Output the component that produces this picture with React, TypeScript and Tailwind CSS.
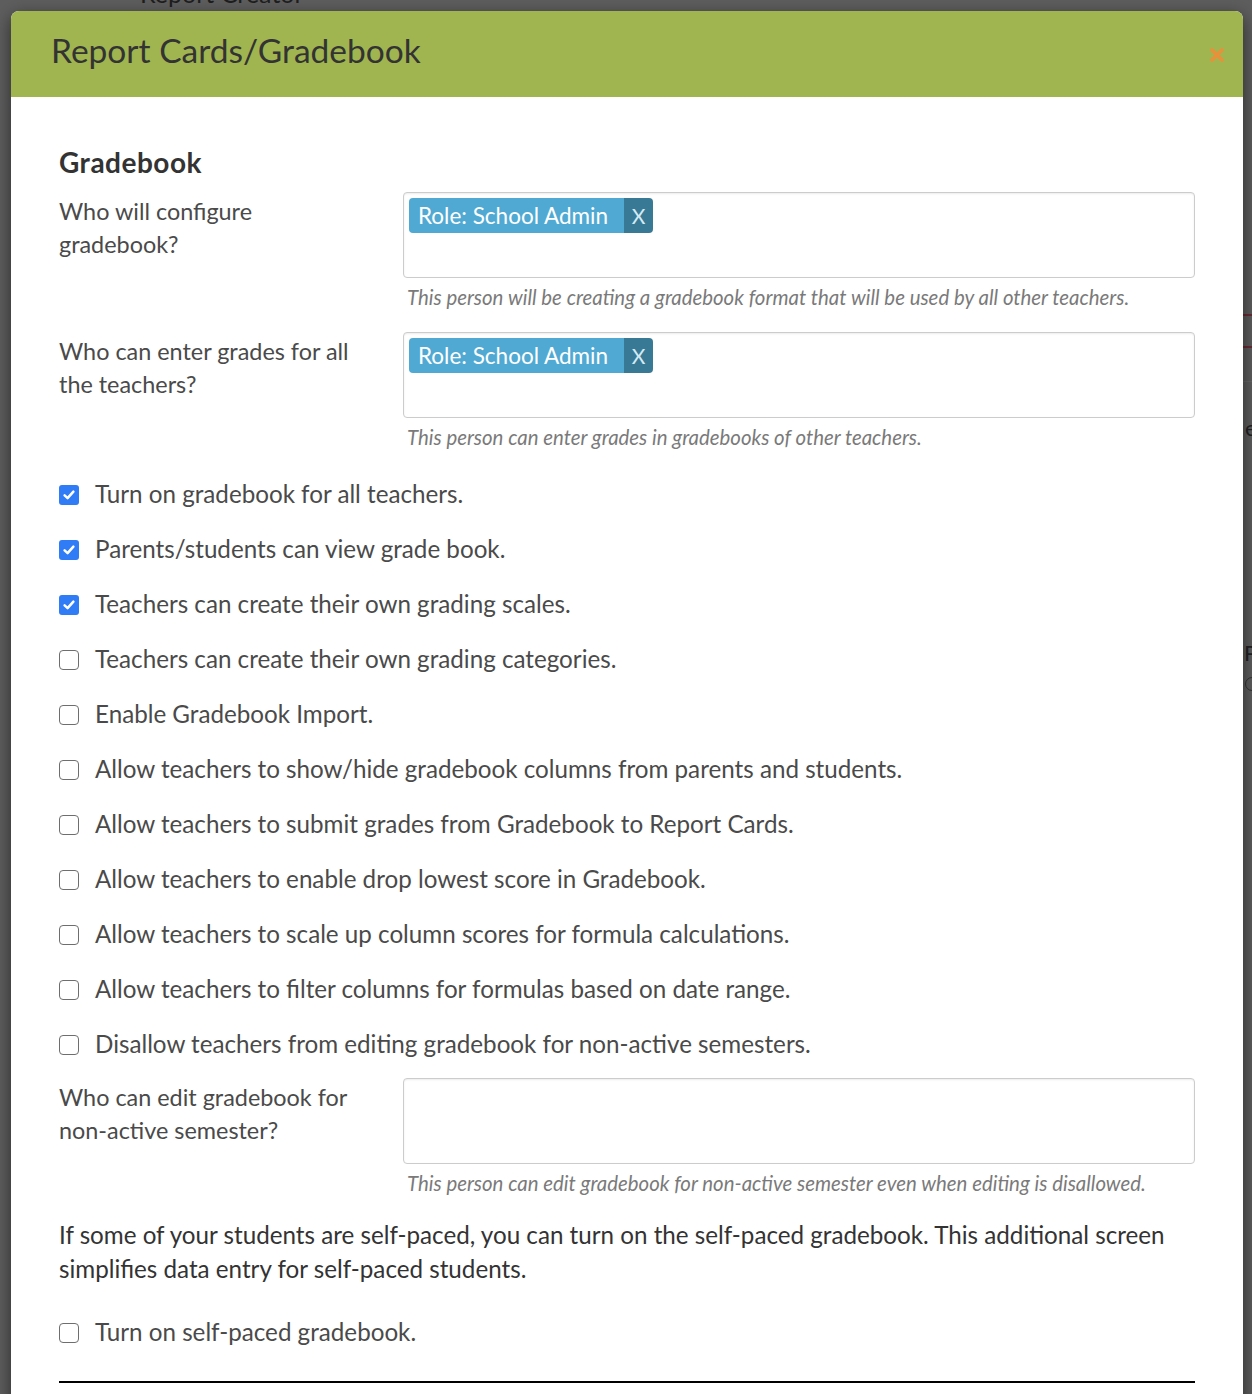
import React from "react";

const font = { fontFamily: "Lato, 'Noto Sans', sans-serif" };

function Check({ checked }: { checked: boolean }) {
  if (checked) {
    return (
      <span className="flex h-[20px] w-[20px] shrink-0 items-center justify-center rounded-[3px] bg-[#2f7cf6]">
        <svg width="14" height="14" viewBox="0 0 14 14">
          <path d="M2.6 7.4 L5.6 10.2 L11.4 3.6" fill="none" stroke="#fff" strokeWidth="2.5" strokeLinecap="round" strokeLinejoin="round" />
        </svg>
      </span>
    );
  }
  return <span className="h-[20px] w-[20px] shrink-0 rounded-[4px] border-[1.5px] border-[#6e6e6e] bg-white" />;
}

function CheckRow({ checked, label }: { checked: boolean; label: string }) {
  return (
    <div className="flex h-[55px] items-center">
      <div className="mr-[16px] flex items-center">
        <Check checked={checked} />
      </div>
      <span className="text-[24.2px] leading-none text-[#4a4a4a]">{label}</span>
    </div>
  );
}

function Tag() {
  return (
    <div className="flex h-[35px] overflow-hidden rounded-[4px]">
      <span className="flex items-center bg-[#4fa9d3] pl-[9px] pr-[16px] text-[22.5px] text-white">Role: School Admin</span>
      <span className="flex w-[29px] items-center justify-center bg-[#387a96] text-[21px] text-[#d4eaf3]">X</span>
    </div>
  );
}

function FieldRow({ label, help, tag, className }: { label: React.ReactNode; help: string; tag?: boolean; className?: string }) {
  return (
    <div className={"flex " + (className || "")}>
      <div className="w-[344px] shrink-0 pr-[30px] pt-[3px] text-[23.4px] leading-[33px] text-[#4a4a4a]">{label}</div>
      <div className="flex-1">
        <div className="h-[86px] rounded-[4px] border border-[#cccccc] bg-white p-[5px] shadow-[inset_0_1px_2px_rgba(0,0,0,0.08)]">
          {tag && (
            <div className="flex">
              <Tag />
            </div>
          )}
        </div>
        <div className="mt-[9px] whitespace-nowrap pl-[4px] text-[20.4px] italic leading-[20px] text-[#7a7a7a]">{help}</div>
      </div>
    </div>
  );
}

export default function App() {
  const checks: [boolean, string][] = [
    [true, "Turn on gradebook for all teachers."],
    [true, "Parents/students can view grade book."],
    [true, "Teachers can create their own grading scales."],
    [false, "Teachers can create their own grading categories."],
    [false, "Enable Gradebook Import."],
    [false, "Allow teachers to show/hide gradebook columns from parents and students."],
    [false, "Allow teachers to submit grades from Gradebook to Report Cards."],
    [false, "Allow teachers to enable drop lowest score in Gradebook."],
    [false, "Allow teachers to scale up column scores for formula calculations."],
    [false, "Allow teachers to filter columns for formulas based on date range."],
    [false, "Disallow teachers from editing gradebook for non-active semesters."],
  ];

  return (
    <div className="relative h-[1394px] w-[1252px] overflow-hidden bg-[#5e5e5e]" style={font}>
      {/* backdrop */}
      <div className="flex">
        <div className="flex-1">
          <div className="-mt-[25px] pl-[140px] text-[25px] text-[#1e1e1e]">Report Creator</div>
        </div>
        <div className="flex w-[9px] flex-col overflow-hidden">
          <div className="mt-[314px] h-[2px] w-[9px] bg-[#6b2b36]" />
          <div className="mt-[30px] h-[2px] w-[9px] bg-[#6b2b36]" />
          <div className="mt-[33px] h-px w-[9px] bg-[#686868]" />
          <div className="mt-[34px] pl-[2px] text-[22px] leading-[24px] text-[#222]">e</div>
          <div className="mt-[201px] whitespace-nowrap pl-[1px] text-[22px] leading-[24px] text-[#222]">Po</div>
          <div className="mt-[12px] ml-[2px] h-[14px] w-[14px] rounded-full border border-[#333]" />
        </div>
      </div>

      {/* modal */}
      <div className="absolute left-[11px] top-[11px] w-[1232px] rounded-t-[8px] bg-white shadow-[0_5px_18px_rgba(0,0,0,0.55)]">
        <div className="flex h-[86px] items-center justify-between rounded-t-[8px] bg-[#a0b54f] pb-[6px] pl-[40px] pr-[19px]">
          <h1 className="text-[33.5px] leading-none text-[#333333]">Report Cards/Gradebook</h1>
          <svg width="14" height="14" viewBox="0 0 14 14" className="mt-[8px]">
            <path d="M2 2 L12 12 M12 2 L2 12" stroke="#e8913a" strokeWidth="3.6" strokeLinecap="round" />
          </svg>
        </div>
        <div className="px-[48px] pt-[48px] pb-[40px]">
          <h2 className="text-[28px] font-bold leading-[34px] tracking-[0.5px] text-[#333333]">Gradebook</h2>
          <FieldRow
            className="mt-[13px]"
            tag
            label={<>Who will configure<br />gradebook?</>}
            help="This person will be creating a gradebook format that will be used by all other teachers."
          />
          <FieldRow
            className="mt-[25px]"
            tag
            label={<>Who can enter grades for all<br />the teachers?</>}
            help="This person can enter grades in gradebooks of other teachers."
          />
          <div className="mt-[20px]">
            {checks.map(([c, l]) => (
              <CheckRow key={l} checked={c} label={l} />
            ))}
          </div>
          <FieldRow
            className="mt-[6px]"
            label={<>Who can edit gradebook for<br />non-active semester?</>}
            help="This person can edit gradebook for non-active semester even when editing is disallowed."
          />
          <p className="mt-[25px] text-[24.2px] leading-[34px] text-[#333333]">
            If some of your students are self-paced, you can turn on the self-paced gradebook. This additional screen simplifies data entry for self-paced students.
          </p>
          <div className="mt-[19px]">
            <CheckRow checked={false} label="Turn on self-paced gradebook." />
          </div>
          <div className="mt-[21px] h-[2px] bg-black" />
          <div className="h-[200px]" />
        </div>
      </div>
    </div>
  );
}
